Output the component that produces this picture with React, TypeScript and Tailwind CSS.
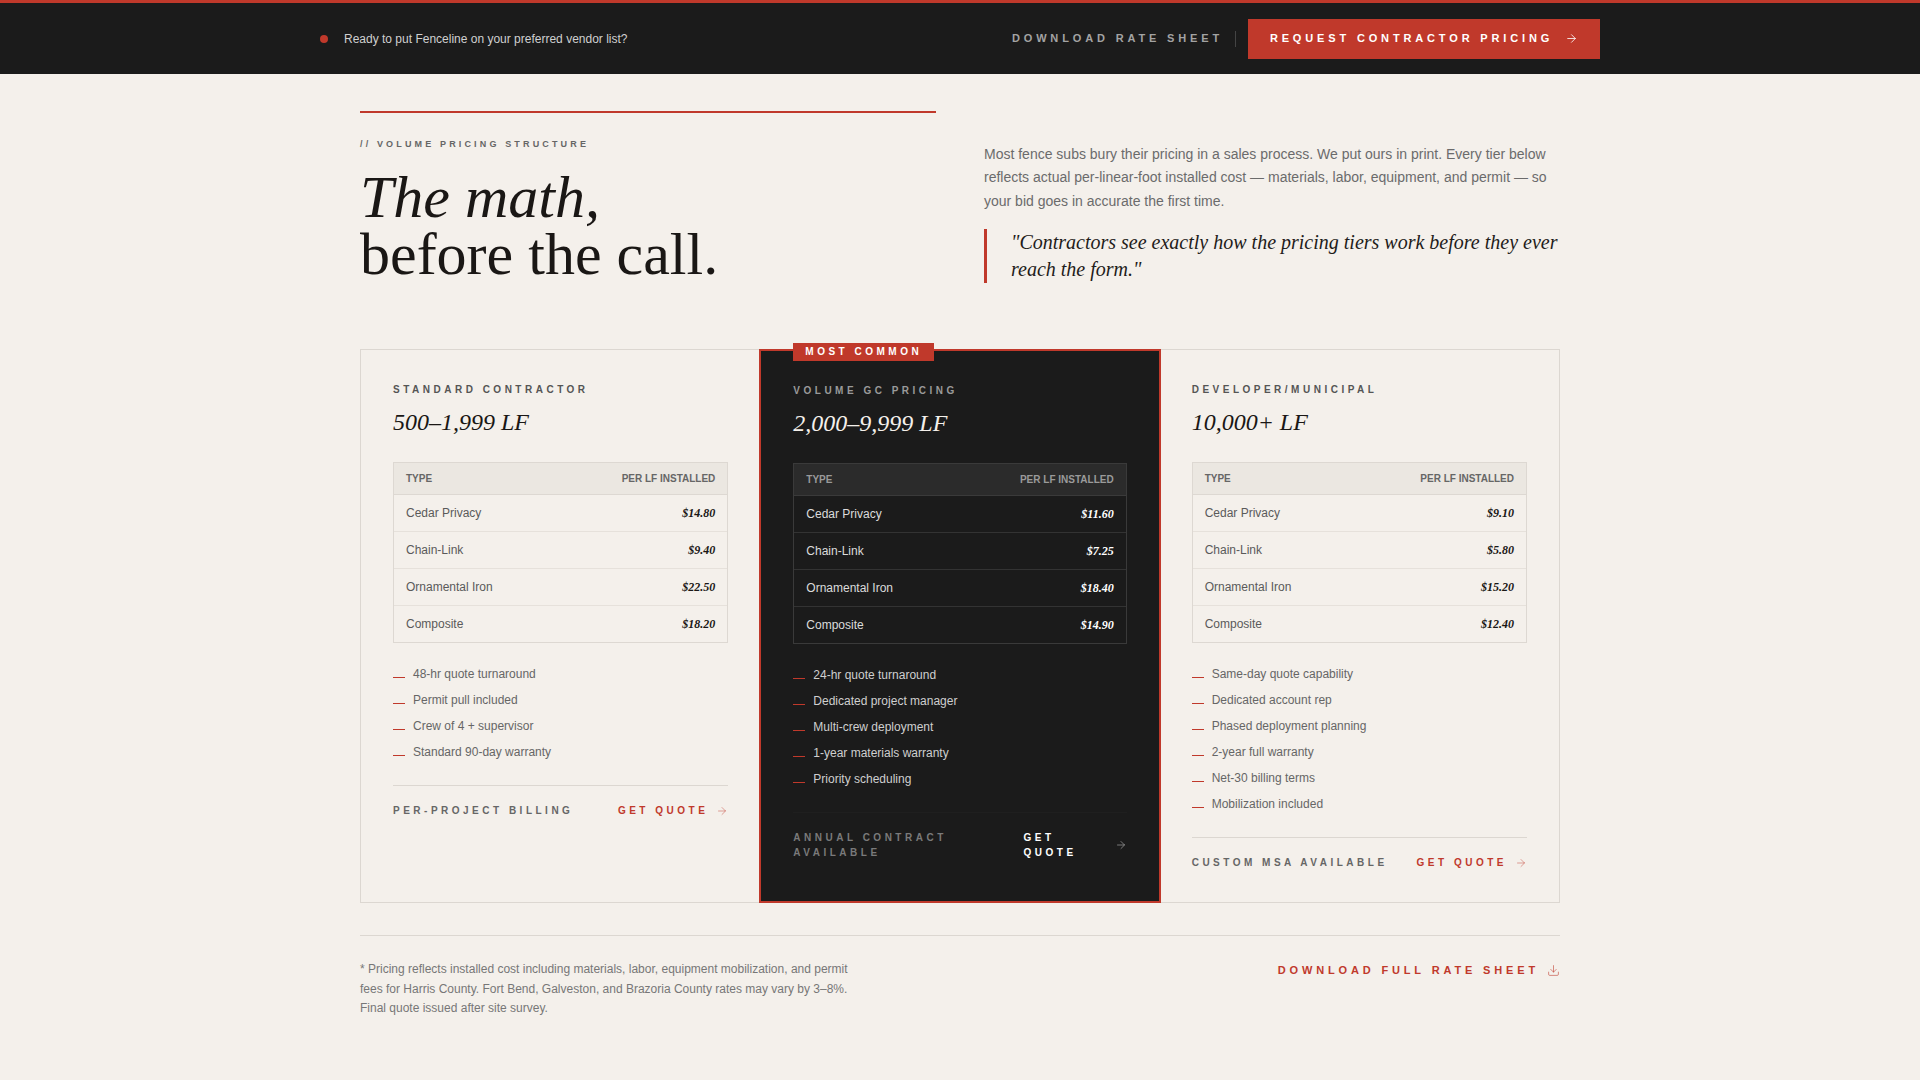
import React from 'react';
import { ArrowRight, Download } from 'lucide-react';

type Tier = {
  name: string;
  range: string;
  rates: [string, string][];
  perks: string[];
  billing: string;
  featured?: boolean;
};

const tiers: Tier[] = [
  {
    name: 'Standard Contractor',
    range: '500–1,999 LF',
    rates: [
      ['Cedar Privacy', '$14.80'],
      ['Chain-Link', '$9.40'],
      ['Ornamental Iron', '$22.50'],
      ['Composite', '$18.20'],
    ],
    perks: ['48-hr quote turnaround', 'Permit pull included', 'Crew of 4 + supervisor', 'Standard 90-day warranty'],
    billing: 'Per-project billing',
  },
  {
    name: 'Volume GC Pricing',
    range: '2,000–9,999 LF',
    rates: [
      ['Cedar Privacy', '$11.60'],
      ['Chain-Link', '$7.25'],
      ['Ornamental Iron', '$18.40'],
      ['Composite', '$14.90'],
    ],
    perks: [
      '24-hr quote turnaround',
      'Dedicated project manager',
      'Multi-crew deployment',
      '1-year materials warranty',
      'Priority scheduling',
    ],
    billing: 'Annual contract available',
    featured: true,
  },
  {
    name: 'Developer/Municipal',
    range: '10,000+ LF',
    rates: [
      ['Cedar Privacy', '$9.10'],
      ['Chain-Link', '$5.80'],
      ['Ornamental Iron', '$15.20'],
      ['Composite', '$12.40'],
    ],
    perks: [
      'Same-day quote capability',
      'Dedicated account rep',
      'Phased deployment planning',
      '2-year full warranty',
      'Net-30 billing terms',
      'Mobilization included',
    ],
    billing: 'Custom MSA available',
  },
];

function TierCard({ tier }: { tier: Tier }) {
  const dark = !!tier.featured;
  return (
    <div
      className={
        dark
          ? 'relative -m-px border-2 border-[#c0392b] bg-[#1b1b1b] p-8'
          : 'p-8'
      }
    >
      {dark && (
        <span className="absolute -top-[8px] left-8 bg-[#c0392b] px-3 py-[3px] text-[10px] font-bold uppercase leading-3 tracking-[0.35em] text-white">
          Most Common
        </span>
      )}
      <h3
        className={`text-[10px] font-bold uppercase leading-4 tracking-[0.35em] ${
          dark ? 'text-[#9a9a9a]' : 'text-[#555]'
        }`}
      >
        {tier.name}
      </h3>
      <p
        className={`mt-2 font-['Liberation_Serif',serif] text-[24px] italic leading-8 ${
          dark ? 'text-[#f4f0eb]' : 'text-[#1a1715]'
        }`}
      >
        {tier.range}
      </p>

      <div className={`mt-6 border ${dark ? 'border-[#3a3a3a]' : 'border-[#ddd8d2]'}`}>
        <div
          className={`flex justify-between border-b px-3 py-2 text-[10px] font-bold uppercase leading-[15px] ${
            dark ? 'border-[#3a3a3a] bg-[#2b2b2b] text-[#9a9a9a]' : 'border-[#ddd8d2] bg-[#ebe7e1] text-[#666]'
          }`}
        >
          <span>Type</span>
          <span>Per LF Installed</span>
        </div>
        {tier.rates.map(([type, price], i) => (
          <div
            key={type}
            className={`flex items-center justify-between px-3 py-[10px] text-xs leading-4 ${
              i < tier.rates.length - 1 ? (dark ? 'border-b border-[#333]' : 'border-b border-[#e6e1db]') : ''
            }`}
          >
            <span className={dark ? 'text-[#dcdcdc]' : 'text-[#5a5a5a]'}>{type}</span>
            <span
              className={`font-['Liberation_Serif',serif] font-bold italic ${
                dark ? 'text-white' : 'text-[#1a1715]'
              }`}
            >
              {price}
            </span>
          </div>
        ))}
      </div>

      <ul className="mt-[22px] flex flex-col gap-2">
        {tier.perks.map((perk) => (
          <li key={perk} className="flex items-center gap-2 text-xs leading-[18px]">
            <span className="h-px w-3 shrink-0 translate-y-[3px] bg-[#c0392b]" />
            <span className={dark ? 'text-[#cfcfcf]' : 'text-[#666]'}>{perk}</span>
          </li>
        ))}
      </ul>

      <div
        className={`mt-6 flex items-center justify-between border-t pt-[17px] ${
          dark ? 'border-[#1f1f1f]' : 'border-[#dcd7d1]'
        }`}
      >
        <span
          className={`text-[10px] font-bold uppercase leading-[15px] tracking-[0.35em] ${
            dark ? 'text-[#7a7a7a]' : 'text-[#666]'
          }`}
        >
          {tier.billing}
        </span>
        <a
          href="#"
          className={`flex items-center gap-2 text-[10px] font-bold uppercase leading-[15px] tracking-[0.35em] ${
            dark ? 'text-white' : 'text-[#c0392b]'
          }`}
        >
          <span>Get Quote</span>
          <ArrowRight
            size={12}
            strokeWidth={1.5}
            className={`shrink-0 ${dark ? 'text-[#9a9a9a]' : 'text-[#c0392b]/60'}`}
          />
        </a>
      </div>
    </div>
  );
}

export default function App() {
  return (
    <div className="min-h-screen bg-[#f4f0eb] font-['Liberation_Sans',Arial,sans-serif] pb-16">
      {/* top strip */}
      <header className="h-[74px] border-t-[3px] border-[#c0392b] bg-[#1b1b1b]">
        <div className="mx-auto flex h-full max-w-[1280px] items-center justify-between">
          <div className="flex items-center gap-4">
            <span className="h-2 w-2 rounded-full bg-[#c0392b]" />
            <span className="text-xs text-[#d0d0d0]">Ready to put Fenceline on your preferred vendor list?</span>
          </div>
          <div className="flex items-center">
            <a href="#" className="text-[11px] font-semibold uppercase tracking-[0.35em] text-[#a3a3a3]">
              Download Rate Sheet
            </a>
            <span className="mx-3 h-4 w-px bg-[#444]" />
            <a
              href="#"
              className="flex h-10 w-[352px] items-center justify-center gap-3 bg-[#c0392b] text-[11px] font-bold uppercase tracking-[0.35em] text-white"
            >
              Request Contractor Pricing
              <ArrowRight size={13} strokeWidth={1.5} />
            </a>
          </div>
        </div>
      </header>

      <main className="mx-auto max-w-[1200px] pt-[37px]">
        <section className="grid grid-cols-2 items-end gap-12">
          <div>
            <div className="h-[2px] bg-[#c0392b]" />
            <p className="mt-[24px] text-[9px] font-bold uppercase leading-[15px] tracking-[0.35em] text-[#666]">
              // Volume Pricing Structure
            </p>
            <h2 className="mt-[17px] font-['Liberation_Serif',serif] text-[60px] leading-[57px] text-[#1a1715]">
              <em className="block">The math,</em>
              <span className="block">before the call.</span>
            </h2>
          </div>
          <div>
            <p className="text-[14px] leading-[23.5px] text-[#6b6b6b]">
              Most fence subs bury their pricing in a sales process. We put ours in print. Every tier below
              reflects actual per-linear-foot installed cost — materials, labor, equipment, and permit — so your
              bid goes in accurate the first time.
            </p>
            <blockquote className="mt-4 border-l-[3px] border-[#c0392b] pl-6 font-['Liberation_Serif',serif] text-[20px] italic leading-[27px] text-[#1f1c1a]">
              "Contractors see exactly how the pricing tiers work before they ever reach the form."
            </blockquote>
          </div>
        </section>

        <section className="mt-[66px] grid grid-cols-3 border border-[#dcd7d1]">
          {tiers.map((tier) => (
            <TierCard key={tier.name} tier={tier} />
          ))}
        </section>

        <footer className="mt-8 flex items-start justify-between border-t border-[#dcd7d1] pt-6">
          <p className="max-w-[500px] text-xs leading-[19.6px] text-[#777]">
            * Pricing reflects installed cost including materials, labor, equipment mobilization, and permit fees
            for Harris County. Fort Bend, Galveston, and Brazoria County rates may vary by 3–8%. Final quote issued
            after site survey.
          </p>
          <a
            href="#"
            className="flex items-center gap-2 text-[11px] font-bold uppercase leading-5 tracking-[0.35em] text-[#c0392b]"
          >
            Download Full Rate Sheet
            <Download size={13} strokeWidth={1.5} className="text-[#c0392b]/70" />
          </a>
        </footer>
      </main>
    </div>
  );
}
